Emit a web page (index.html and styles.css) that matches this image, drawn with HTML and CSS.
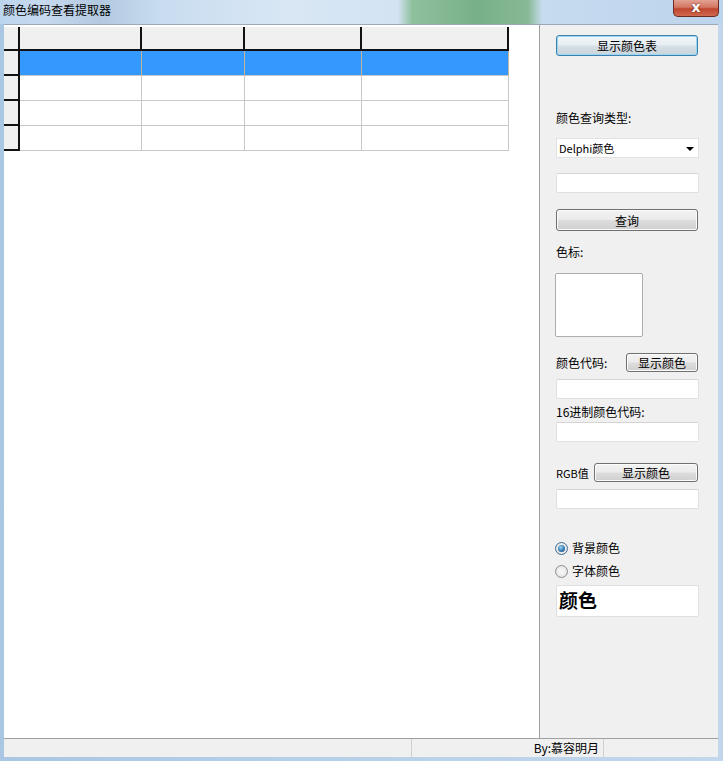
FILE: index.html
```html
<!DOCTYPE html>
<html lang="zh-CN">
<head>
    <meta charset="UTF-8">
    <meta name="viewport" content="width=device-width, initial-scale=1.0">
    <title>颜色编码查看提取器</title>
    <link rel="stylesheet" href="styles.css">
</head>
<body>
    <div class="window">
        <div class="titlebar">
            <span class="title">颜色编码查看提取器</span>
            <span class="close">x</span>
        </div>
        <div class="client">
            <div class="main">
                <div class="left-pane">
                    <div class="grid">
                        <div class="cell fixed"></div><div class="cell fixed"></div><div class="cell fixed"></div><div class="cell fixed"></div><div class="cell fixed"></div>
                        <div class="cell fixed"></div><div class="cell sel"></div><div class="cell sel"></div><div class="cell sel"></div><div class="cell sel"></div>
                        <div class="cell fixed"></div><div class="cell"></div><div class="cell"></div><div class="cell"></div><div class="cell"></div>
                        <div class="cell fixed"></div><div class="cell"></div><div class="cell"></div><div class="cell"></div><div class="cell"></div>
                        <div class="cell fixed"></div><div class="cell"></div><div class="cell"></div><div class="cell"></div><div class="cell"></div>
                    </div>
                </div>
                <div class="right-pane">
                    <button class="btn btn-focus btn-wide">显示颜色表</button>
                    <div class="label lbl-type">颜色查询类型:</div>
                    <div class="select">Delphi颜色<span class="arrow"></span></div>
                    <div class="edit edit-query"></div>
                    <button class="btn btn-wide btn-query">查询</button>
                    <div class="label lbl-swatch">色标:</div>
                    <div class="swatch"></div>
                    <div class="row row-code">
                        <span class="label">颜色代码:</span>
                        <button class="btn btn-small">显示颜色</button>
                    </div>
                    <div class="edit edit-code"></div>
                    <div class="label lbl-hex">16进制颜色代码:</div>
                    <div class="edit edit-hex"></div>
                    <div class="row row-rgb">
                        <span class="label">RGB值</span>
                        <button class="btn btn-rgb">显示颜色</button>
                    </div>
                    <div class="edit edit-rgb"></div>
                    <label class="radio radio-bg"><span class="dot checked"></span>背景颜色</label>
                    <label class="radio radio-fg"><span class="dot"></span>字体颜色</label>
                    <div class="preview">颜色</div>
                </div>
            </div>
            <div class="statusbar">
                <div class="panel panel-1"></div>
                <div class="panel panel-2">By:慕容明月</div>
                <div class="panel panel-3"></div>
            </div>
        </div>
    </div>
</body>
</html>
```

FILE: styles.css
```css
body {
    margin: 0;
    font-family: "Noto Sans CJK SC", "Liberation Sans", sans-serif;
    font-size: 12px;
    color: #000;
}

.window {
    width: 723px;
    height: 761px;
    display: flex;
    flex-direction: column;
    background: linear-gradient(to right, #a9c6e2 0, #b5cfe8 40%, #c2d7ec 100%);
}

.titlebar {
    height: 24px;
    display: flex;
    justify-content: space-between;
    align-items: flex-start;
    padding: 0 4px 0 3px;
    background: linear-gradient(to right, #bcd5ee 0, #c6d9ee 6%, #b3c9df 14%, #c8dcf0 22%, #d9e7f4 40%, #d3e3f2 55%, #8fc09e 57%, #78b089 66%, #86b995 73%, #c7dbef 75%, #bcd4ec 100%);
}

.title {
    line-height: 20px;
    font-size: 12px;
}

.close {
    width: 46px;
    height: 17px;
    box-sizing: border-box;
    border: 1px solid #6b2a22;
    border-top: none;
    border-radius: 0 0 5px 5px;
    background: linear-gradient(#e3a293 0, #d27763 45%, #c0462f 55%, #cf6a4f 100%);
    color: #fff;
    font-family: "DejaVu Sans", sans-serif;
    font-weight: bold;
    font-size: 14px;
    line-height: 14px;
    text-align: center;
    text-shadow: 0 0 2px #5a1a10;
}

.client {
    flex: 1;
    margin: 0 5px 4px 4px;
    border-top: 1px solid #9aa8b8;
    display: flex;
    flex-direction: column;
    background: #f0f0f0;
}

.main {
    height: 713px;
    display: flex;
}

.left-pane {
    width: 535px;
    background: #fff;
    border-right: 1px solid #a0a0a0;
    padding-top: 2px;
}

.grid {
    display: grid;
    grid-template-columns: 16px 122px 103px 117px 147px;
    grid-template-rows: 24px 25px 25px 25px 25px;
    width: 505px;
}

.cell {
    box-sizing: border-box;
    border-right: 1px solid #c8c8c8;
    border-bottom: 1px solid #c8c8c8;
}

.cell.fixed {
    background: #f0f0f0;
    border-right: 2px solid #111;
    border-bottom: 2px solid #111;
}

.cell.sel {
    background: #3399ff;
    border-right-color: #c4b39a;
}

.right-pane {
    width: 178px;
    box-sizing: border-box;
    padding: 10px 19px 0 16px;
    display: flex;
    flex-direction: column;
}

.label {
    line-height: 14px;
    height: 14px;
}

.btn {
    font-family: inherit;
    font-size: 12px;
    height: 21px;
    padding: 0;
    border: 1px solid #707070;
    border-radius: 3px;
    background: linear-gradient(#f3f3f3 0, #ebebeb 48%, #dddddd 52%, #cfcfcf 100%);
    box-shadow: inset 0 0 0 1px #fbfbfb;
    color: #000;
}

.btn-wide {
    width: 142px;
}

.btn-focus {
    border-color: #3c7fb1;
    box-shadow: inset 0 0 0 1px #9ad8f1;
    background: linear-gradient(#f1f6f9 0, #e7eef2 48%, #d6e0e6 52%, #c9d4db 100%);
}

.lbl-type { margin-top: 55px; }

.select {
    margin-top: 13px;
    height: 20px;
    box-sizing: border-box;
    border: 1px solid #e2e2e2;
    background: #fff;
    font-size: 11px;
    line-height: 18px;
    padding-left: 2px;
    position: relative;
}

.arrow {
    position: absolute;
    right: 4px;
    top: 8px;
    border-left: 4px solid transparent;
    border-right: 4px solid transparent;
    border-top: 4px solid #000;
}

.edit {
    height: 20px;
    box-sizing: border-box;
    border: 1px solid #e0e0e0;
    border-top-color: #d4d4d4;
    border-radius: 2px;
    background: #fff;
}

.edit-query { margin-top: 15px; }

.btn-query {
    margin-top: 16px;
    height: 22px;
}

.lbl-swatch { margin-top: 14px; }

.swatch {
    margin-top: 14px;
    margin-left: -1px;
    width: 88px;
    height: 64px;
    box-sizing: border-box;
    border: 1px solid #abadb3;
    border-radius: 2px;
    background: #fff;
}

.row {
    display: flex;
    align-items: center;
    justify-content: space-between;
    height: 19px;
    padding-right: 1px;
}

.row-code { margin-top: 16px; }

.btn-small {
    width: 72px;
    height: 19px;
}

.edit-code { margin-top: 7px; }

.lbl-hex { margin-top: 6px; }

.edit-hex { margin-top: 3px; }

.row-rgb { margin-top: 21px; }

.row-rgb .label {
    font-size: 11px;
}

.btn-rgb {
    width: 104px;
    height: 19px;
}

.edit-rgb { margin-top: 7px; }

.radio {
    display: flex;
    align-items: center;
    height: 14px;
    line-height: 14px;
    margin-left: -1px;
}

.radio-bg { margin-top: 32px; }

.radio-fg { margin-top: 9px; }

.dot {
    width: 11px;
    height: 11px;
    border: 1px solid #8e8f8f;
    border-radius: 50%;
    background: radial-gradient(#f4f4f4 30%, #d8d8d8 100%);
    margin-right: 4px;
    position: relative;
}

.dot.checked {
    border-color: #3c6d94;
}

.dot.checked::after {
    content: "";
    position: absolute;
    left: 2px;
    top: 2px;
    width: 7px;
    height: 7px;
    border-radius: 50%;
    background: radial-gradient(circle at 40% 35%, #9fd9f7 0, #2f78b1 55%, #1b4a79 100%);
}

.preview {
    margin-top: 7px;
    height: 32px;
    box-sizing: border-box;
    border: 1px solid #e0e0e0;
    border-radius: 2px;
    background: #fff;
    font-size: 19px;
    font-weight: bold;
    line-height: 28px;
    padding-left: 2px;
}

.statusbar {
    height: 19px;
    box-sizing: border-box;
    border-top: 1px solid #a0a0a0;
    display: flex;
    background: #f0f0f0;
}

.panel {
    line-height: 18px;
}

.panel-1 {
    width: 407px;
    border-right: 1px solid #d0d0d0;
}

.panel-2 {
    width: 192px;
    border-right: 1px solid #d0d0d0;
    text-align: right;
    padding-right: 4px;
    box-sizing: border-box;
}

.panel-3 {
    flex: 1;
}
```
